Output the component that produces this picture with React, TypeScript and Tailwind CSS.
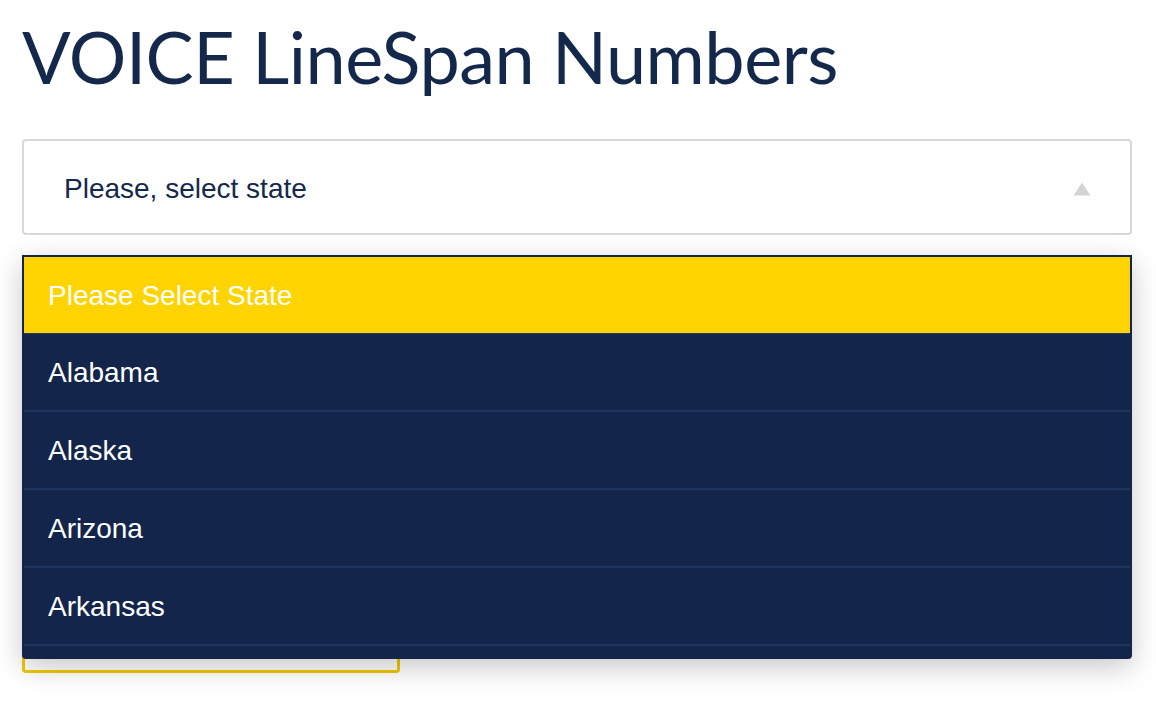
import { useState } from 'react';

const states = ['Alabama', 'Alaska', 'Arizona', 'Arkansas'];

function Caret() {
  return (
    <svg width="18" height="14" viewBox="0 0 18 14" className="shrink-0">
      <path d="M9 0.5 L17.5 13.5 L0.5 13.5 Z" fill="#d4d4d4" />
    </svg>
  );
}

export default function App() {
  const [value] = useState<string | null>(null);

  return (
    <div className="min-h-[706px] bg-white px-[22px] pt-[13px] font-['Liberation_Sans',Arial,sans-serif]">
      <h1 className="font-['Lato',sans-serif] text-[72px] leading-[86px] font-normal text-[#14284b] tracking-[-0.5px]">
        VOICE LineSpan Numbers
      </h1>

      <div className="mt-[40px] w-[1110px]">
        <div className="relative">
          <button
            type="button"
            className="flex h-[96px] w-full items-center justify-between rounded-[4px] border-2 border-[#d8d8d8] bg-white pl-[40px] pr-[39px] pt-[3px] text-left"
          >
            <span className="text-[28px] text-[#14284b]">{value ?? 'Please, select state'}</span>
            <Caret />
          </button>

          {/* open list, scrolled to the top */}
          <div className="absolute left-0 right-0 top-full z-10 mt-[20px] h-[404px] overflow-hidden rounded-b-[4px] border-2 border-[#14254a] bg-[#13254a] shadow-[0_8px_28px_rgba(0,0,0,0.22)]">
            <div className="flex h-[77px] items-center border-b border-[#22396a] bg-[#ffd400] px-[24px] pt-[2px] text-[28px] text-white">
              Please Select State
            </div>
            {states.map((s) => (
              <div
                key={s}
                className="flex h-[78px] items-center border-b-2 border-[#1f3560] px-[24px] pt-[2px] text-[28px] text-white"
              >
                {s}
              </div>
            ))}
          </div>
        </div>

        <div className="mt-[376px] h-[62px] w-[378px] rounded-[4px] border-[3px] border-[#f2c800]" />
      </div>
    </div>
  );
}
